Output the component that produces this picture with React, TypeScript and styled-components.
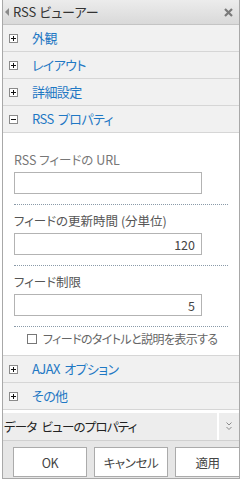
import React from "react";
import styled, { createGlobalStyle } from "styled-components";

const Global = createGlobalStyle`
  html, body { margin: 0; padding: 0; background: #ffffff; }
  body {
    font-family: "Noto Sans CJK JP", "Noto Sans", sans-serif;
    font-feature-settings: "palt";
  }
  * { box-sizing: border-box; }
`;

const Panel = styled.div`
  margin-left: 2px;
  width: 238px;
  height: 479px;
  border-left: 1px solid #a8a8a8;
  border-right: 1px solid #a8a8a8;
  border-bottom: 1px solid #a8a8a8;
  display: flex;
  flex-direction: column;
  background: #ffffff;
`;

const Header = styled.div`
  height: 25px;
  display: flex;
  align-items: center;
  padding: 0 6px 0 2px;
  background: linear-gradient(#ececec, #d9d9d9);
  border-bottom: 1px solid #c4c4c4;
`;

const Title = styled.span`
  flex: 1;
  font-size: 13px;
  color: #333333;
  line-height: 16px;
  margin-left: 3px;
`;

const Row = styled.div`
  height: 27px;
  display: flex;
  align-items: center;
  padding-left: 6px;
  background: #f1f1f1;
  border-bottom: 1px solid #d6d6d6;
`;

const Box = styled.span`
  width: 9px;
  height: 9px;
  border: 1px solid #8a8a8a;
  background: #ffffff;
  display: flex;
  align-items: center;
  justify-content: center;
`;

const RowLabel = styled.span`
  margin-left: 14px;
  font-size: 13px;
  line-height: 16px;
  color: #1f78c4;
  letter-spacing: -0.6px;
  word-spacing: 2px;
`;

const Content = styled.div`
  padding: 18px 11px 0 11px;
  border-bottom: 1px solid #d6d6d6;
`;

const Field = styled.div<{ $first?: boolean }>`
  padding-top: ${(p) => (p.$first ? "0" : "7px")};
  padding-bottom: 10px;
  border-bottom: 1px dotted #8a9aa8;
  display: flex;
  flex-direction: column;
  gap: 3px;
`;

const FieldLabel = styled.label<{ $muted?: boolean }>`
  font-size: 12.5px;
  line-height: 18px;
  color: ${(p) => (p.$muted ? "#777777" : "#555555")};
`;

const Input = styled.input`
  width: 188px;
  height: 22px;
  border: 1px solid #b3b3b3;
  padding: 0 6px;
  font-family: "Noto Sans CJK JP", "Noto Sans", sans-serif;
  font-size: 12.5px;
  color: #444444;
  text-align: right;
  outline: none;
  background: #ffffff;
`;

const CheckRow = styled.label`
  height: 28px;
  display: flex;
  align-items: center;
  padding-left: 13px;
  padding-bottom: 5px;
  font-size: 12px;
  letter-spacing: -0.6px;
  color: #666666;
  white-space: nowrap;
`;

const Check = styled.span`
  flex: none;
  width: 10px;
  height: 10px;
  border: 1px solid #777777;
  background: #ffffff;
  margin-right: 6px;
`;

const DataBar = styled.div`
  margin-top: 3px;
  height: 28px;
  display: flex;
  gap: 2px;
  border-bottom: 1px solid #d0d0d0;
`;

const DataTitle = styled.div`
  flex: 1;
  background: #ededed;
  display: flex;
  align-items: center;
  padding-left: 1px;
  font-size: 12.5px;
  letter-spacing: -0.8px;
  word-spacing: 3px;
  color: #222222;
  white-space: pre;
`;

const DataToggle = styled.div`
  width: 20px;
  background: #ededed;
  display: flex;
  align-items: center;
  justify-content: center;
`;

const ButtonBar = styled.div`
  flex: 1;
  background: #e6e6e6;
  display: flex;
  align-items: flex-start;
  padding: 6px 0 0 10px;
  gap: 7px;
  overflow: hidden;
`;

const Button = styled.button<{ $w: number }>`
  flex: none;
  width: ${(p) => p.$w}px;
  height: 30px;
  background: #ffffff;
  border: 1px solid #ababab;
  font-family: "Noto Sans CJK JP", "Noto Sans", sans-serif;
  font-feature-settings: "palt";
  font-size: 12.5px;
  letter-spacing: -0.4px;
  color: #444444;
  padding: 0;
`;

const Sign = ({ minus }: { minus?: boolean }) => (
  <svg width="5" height="5" viewBox="0 0 5 5">
    <rect x="0" y="2" width="5" height="1" fill="#111" />
    {!minus && <rect x="2" y="0" width="1" height="5" fill="#111" />}
  </svg>
);

const Section = ({ label, open }: { label: string; open?: boolean }) => (
  <Row>
    <Box>
      <Sign minus={open} />
    </Box>
    <RowLabel>{label}</RowLabel>
  </Row>
);

export default function App() {
  return (
    <>
      <Global />
      <Panel>
        <Header>
          <svg width="5" height="8" viewBox="0 0 5 8">
            <path d="M4 0 L0 4 L4 8 Z" fill="#8a8a8a" />
          </svg>
          <Title>RSS ビューアー</Title>
          <svg width="9" height="9" viewBox="0 0 9 9">
            <path d="M1 1 L8 8 M8 1 L1 8" stroke="#7a7a7a" strokeWidth="2.2" />
          </svg>
        </Header>
        <Section label="外観" />
        <Section label="レイアウト" />
        <Section label="詳細設定" />
        <Section label="RSS プロパティ" open />
        <Content>
          <Field $first>
            <FieldLabel $muted>RSS フィードの URL</FieldLabel>
            <Input defaultValue="" />
          </Field>
          <Field>
            <FieldLabel>フィードの更新時間 (分単位)</FieldLabel>
            <Input defaultValue="120" />
          </Field>
          <Field>
            <FieldLabel>フィード制限</FieldLabel>
            <Input defaultValue="5" />
          </Field>
          <CheckRow>
            <Check />
            フィードのタイトルと説明を表示する
          </CheckRow>
        </Content>
        <Section label="AJAX オプション" />
        <Section label="その他" />
        <DataBar>
          <DataTitle>データ ビューのプロパティ</DataTitle>
          <DataToggle>
            <svg width="6" height="9" viewBox="0 0 6 9">
              <path d="M0.5 0.5 L3 3 L5.5 0.5 M0.5 5 L3 7.5 L5.5 5" stroke="#8a8a8a" strokeWidth="1" fill="none" />
            </svg>
          </DataToggle>
        </DataBar>
        <ButtonBar>
          <Button $w={74}>OK</Button>
          <Button $w={74}>キャンセル</Button>
          <Button $w={65}>適用</Button>
        </ButtonBar>
      </Panel>
    </>
  );
}
